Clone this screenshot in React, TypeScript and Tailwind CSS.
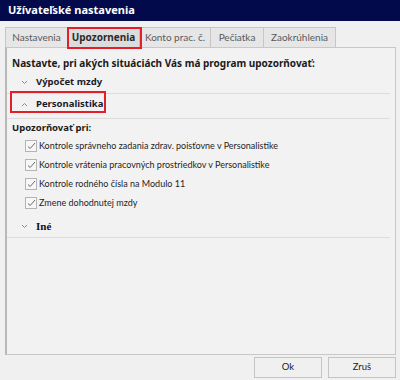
import { useState } from 'react';

const tabs = [
  { id: 'nastavenia', label: 'Nastavenia', w: 'w-[63px]' },
  { id: 'upozornenia', label: 'Upozornenia', w: 'w-[73px]' },
  { id: 'konto', label: 'Konto prac. č.', w: 'w-[72px]' },
  { id: 'peciatka', label: 'Pečiatka', w: 'w-[54px]' },
  { id: 'zaokruhlenia', label: 'Zaokrúhlenia', w: 'w-[73px]' },
];

const checks = [
  'Kontrole správneho zadania zdrav. poisťovne v Personalistike',
  'Kontrole vrátenia pracovných prostriedkov v Personalistike',
  'Kontrole rodného čísla na Modulo 11',
  'Zmene dohodnutej mzdy',
];

function Chevron({ up }: { up?: boolean }) {
  return (
    <svg width="7" height="5" viewBox="0 0 7 5" className="shrink-0">
      <polyline
        points={up ? '1,4 3.5,1.5 6,4' : '1,1 3.5,3.5 6,1'}
        fill="none"
        stroke="#8a8a8a"
        strokeWidth="1"
      />
    </svg>
  );
}

function Check() {
  return (
    <span className="w-[12px] h-[12px] border border-[#b4b4b4] bg-[#f7f7f7] flex items-center justify-center shrink-0">
      <svg width="9" height="8" viewBox="0 0 9 8">
        <polyline points="1,4.5 3.2,6.5 8,1" fill="none" stroke="#6a6a6a" strokeWidth="1" />
      </svg>
    </span>
  );
}

export default function App() {
  const [active, setActive] = useState('upozornenia');
  const [checked] = useState([true, true, true, true]);

  return (
    <div className="w-[400px] h-[380px] bg-[#f0f0f0] flex flex-col overflow-hidden font-['Noto_Sans',sans-serif] text-[10px] text-[#1b1b1b]">
      {/* title bar */}
      <div className="h-[21px] bg-[#020a4c] text-white font-bold text-[11px] pl-[8px] flex items-center">
        Užívateľské nastavenia
      </div>

      {/* tabs */}
      <div className="mt-[6px] ml-[5px] flex h-[20px] font-['Lato',sans-serif] text-[10px]">
        {tabs.map((t) => (
          <div
            key={t.id}
            onClick={() => setActive(t.id)}
            className={`${t.w} h-[20px] flex items-center justify-center border border-b-0 -ml-px first:ml-0 ${
              active === t.id
                ? "relative bg-[#dcdcdc] border-[#bdbdbd] font-bold text-[#2a2a2a] font-['Noto_Sans',sans-serif]"
                : 'bg-[#e6e6e6] border-[#c6c6c6] text-[#5a5a5a]'
            }`}
          >
            {t.label}
            {active === t.id && (
              <span className="absolute -left-px -top-px -right-[3px] -bottom-[2px] border-2 border-[#e3202a]" />
            )}
          </div>
        ))}
      </div>

      {/* panel */}
      <div className="ml-[5px] w-[391px] h-[308px] border border-[#c8c8c8] border-l-2 border-l-[#b8b8b8] bg-[#f2f2f2] flex flex-col">
        <div className="h-[24px] pt-[8px] pl-[5px] font-bold leading-[14px]">
          Nastavte, pri akých situáciách Vás má program upozorňovať:
        </div>

        <div className="mr-[5px] h-[22px] flex items-center gap-[8px] pl-[14px] border-b border-[#dcdcdc] font-bold text-[9.5px] text-[#1a1a2a]">
          <Chevron />
          <span>Výpočet mzdy</span>
        </div>

        <div className="mr-[5px] h-[25px] border-b border-[#dcdcdc] relative">
          <div className="h-[20px] flex items-center gap-[8px] pl-[14px] font-bold text-[9.5px] text-[#1a1a2a]">
            <Chevron up />
            <span>Personalistika</span>
          </div>
          <span className="absolute left-[3px] top-[-3px] w-[96px] h-[22px] border-2 border-[#e3202a]" />
        </div>

        <div className="h-[18px] flex items-center pl-[5px] font-bold text-[9.5px]">Upozorňovať pri:</div>

        <div className="-mt-px flex flex-col font-['Lato',sans-serif] text-[9px] text-[#1e1e1e]">
          {checks.map((c, i) => (
            <div key={c} className="h-[19px] flex items-center gap-[2px] pl-[18px]">
              {checked[i] && <Check />}
              <span>{c}</span>
            </div>
          ))}
        </div>

        <div className="mt-[4px] mr-[5px] h-[22px] flex items-center gap-[8px] pl-[14px] border-b border-[#dcdcdc]">
          <Chevron />
          <span className="font-['Liberation_Serif',serif] font-bold text-[11px] text-[#111]">Iné</span>
        </div>
      </div>

      {/* buttons */}
      <div className="mt-[2px] flex justify-end gap-[6px] pr-[4px] font-['Lato',sans-serif]">
        <button className="w-[68px] h-[21px] border border-[#c4c4c4] bg-[#f0f0f0] text-[9.5px] text-[#222]">Ok</button>
        <button className="w-[68px] h-[21px] border border-[#c4c4c4] bg-[#f0f0f0] text-[9.5px] text-[#222]">Zruš</button>
      </div>
    </div>
  );
}
